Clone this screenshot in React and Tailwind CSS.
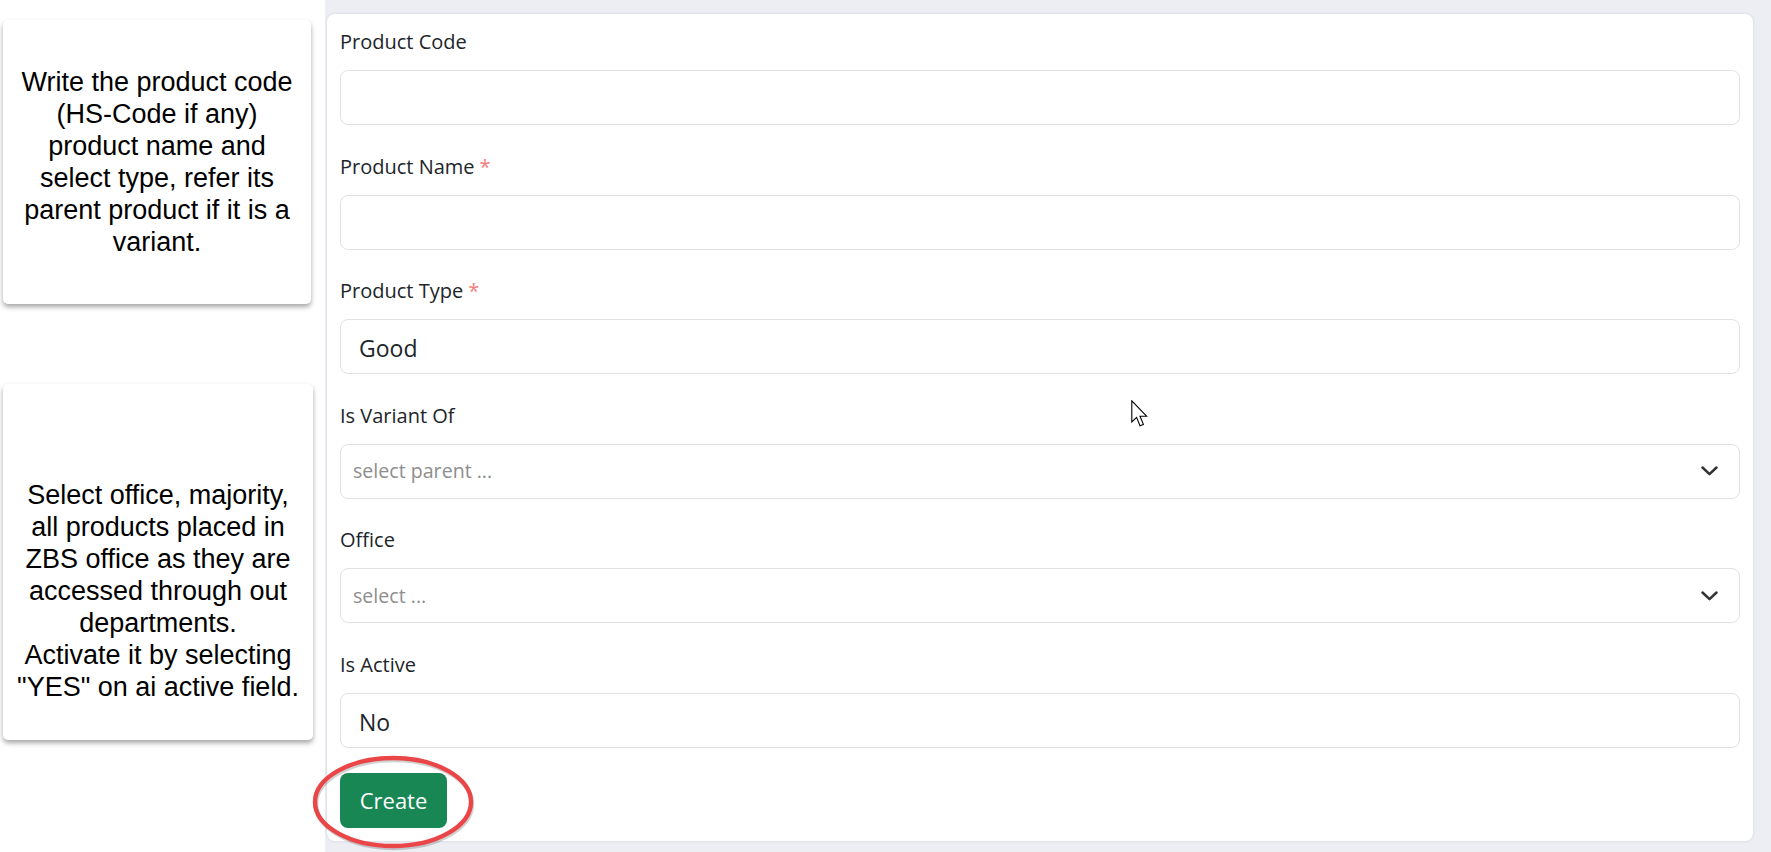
import React from 'react';

const Chevron = () => (
    <svg width="17" height="10" viewBox="0 0 17 10" fill="none">
        <path d="M1.5 1.5 L8.5 8.2 L15.5 1.5" stroke="#333" strokeWidth="2.5" strokeLinecap="round" strokeLinejoin="round" />
    </svg>
);

const Field = ({ label, required, children }) => (
    <div className="flex flex-col">
        <label className="text-[20px] leading-[28px] text-[#212529] mb-[14px]">
            {label}
            {required && <span className="text-[#f37b7b] ml-[5px]">*</span>}
        </label>
        {children}
    </div>
);

const boxCls = 'h-[55px] w-full rounded-[8px] border border-[#dee2e6] bg-white flex items-center';

const App = () => {
    return (
        <div className="relative w-[1771px] h-[852px] flex overflow-hidden bg-white font-['Open_Sans',sans-serif]">
            {/* help notes */}
            <div className="w-[325px] shrink-0 bg-white pt-[20px] pl-[3px] font-['Liberation_Sans',Arial,sans-serif] text-black text-[27px] leading-[32px] text-center">
                <div className="w-[308px] h-[284px] rounded-[5px] bg-white shadow-[0_3px_5px_rgba(0,0,0,0.35)] flex flex-col items-center justify-center">
                    <p>
                        Write the product code<br />
                        (HS-Code if any)<br />
                        product name and<br />
                        select type, refer its<br />
                        parent product if it is a<br />
                        variant.
                    </p>
                </div>
                <div className="w-[310px] h-[356px] mt-[80px] rounded-[5px] bg-white shadow-[0_3px_5px_rgba(0,0,0,0.35)] pt-[95px]">
                    <p>
                        Select office, majority,<br />
                        all products placed in<br />
                        ZBS office as they are<br />
                        accessed through out<br />
                        departments.<br />
                        Activate it by selecting<br />
                        "YES" on ai active field.
                    </p>
                </div>
            </div>

            {/* form */}
            <div className="flex-1 bg-[#eceef3] pt-[14px] pl-[2px] pr-[18px] pb-[11px]">
                <div className="h-full rounded-[8px] bg-white shadow-[0_0_3px_rgba(0,0,0,0.12)] px-[13px] pt-[14px] pb-[13px] flex flex-col">
                    <div className="flex flex-col gap-[27.5px]">
                        <Field label="Product Code">
                            <div className={boxCls}></div>
                        </Field>
                        <Field label="Product Name" required>
                            <div className={boxCls}></div>
                        </Field>
                        <Field label="Product Type" required>
                            <div className={boxCls + ' pl-[18px] pt-[4px] text-[23px] text-[#212529]'}>Good</div>
                        </Field>
                        <Field label="Is Variant Of">
                            <div className={boxCls + ' justify-between pl-[12px] pr-[21px] text-[19.6px] text-[#8e8e8e]'}>
                                <span>select parent ...</span>
                                <Chevron />
                            </div>
                        </Field>
                        <Field label="Office">
                            <div className={boxCls + ' justify-between pl-[12px] pr-[21px] text-[19.6px] text-[#8e8e8e]'}>
                                <span>select ...</span>
                                <Chevron />
                            </div>
                        </Field>
                        <Field label="Is Active">
                            <div className={boxCls + ' pl-[18px] pt-[4px] text-[23px] text-[#212529]'}>No</div>
                        </Field>
                    </div>
                    <div className="mt-[25px]">
                        <button className="h-[55px] w-[107px] rounded-[8px] bg-[#198754] text-white text-[22px]">
                            Create
                        </button>
                    </div>
                </div>
            </div>

            {/* annotation ring */}
            <svg className="absolute left-[311px] top-[755px]" width="166" height="98" viewBox="0 0 166 98">
                <ellipse cx="82" cy="47" rx="78" ry="44" fill="none" stroke="rgba(0,0,0,0.18)" strokeWidth="4.5" transform="translate(1 2)" />
                <ellipse cx="82" cy="47" rx="78" ry="44" fill="none" stroke="#ea4648" strokeWidth="4.4" />
            </svg>

            {/* mouse pointer */}
            <svg className="absolute left-[1131px] top-[400px]" width="19" height="28" viewBox="0 0 19 28">
                <path d="M0.8 0.8 L0.8 22 L5.6 17.4 L9 25.8 L12.4 24.4 L9 16.2 L15.6 16.2 Z" fill="#fff" stroke="#000" strokeWidth="1.1" strokeLinejoin="miter" />
            </svg>
        </div>
    );
};

export default App;
